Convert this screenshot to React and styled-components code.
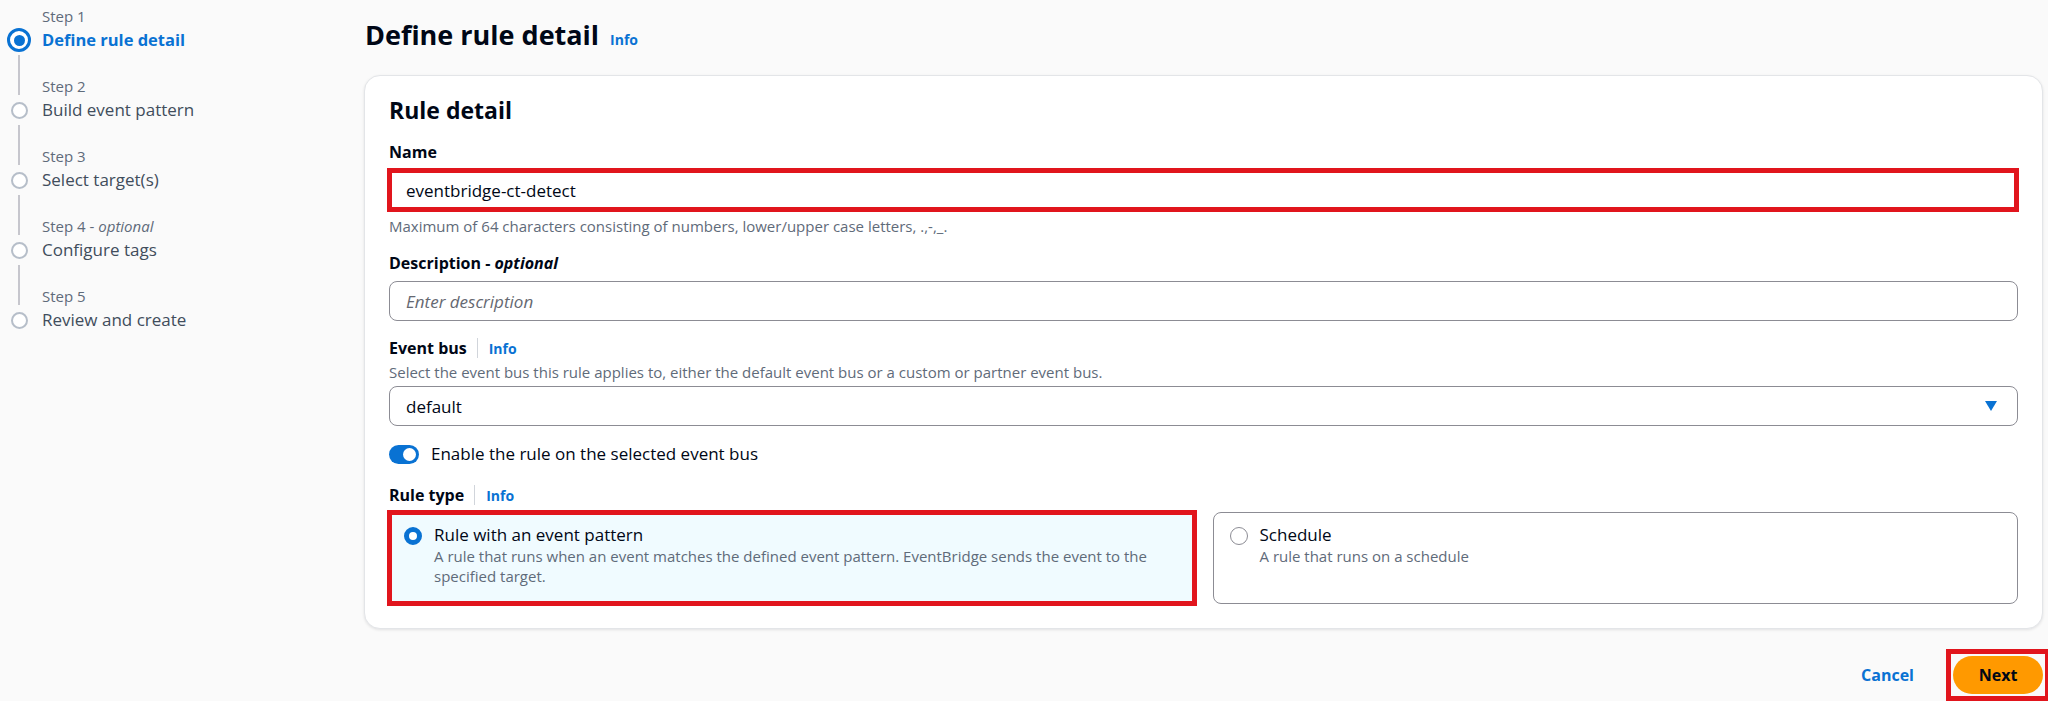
import styled, { createGlobalStyle } from "styled-components";

const GlobalStyle = createGlobalStyle`
  body {
    margin: 0;
    background: #fafafa;
    font-family: "Open Sans", "Liberation Sans", sans-serif;
    color: #000716;
  }
  * { box-sizing: border-box; }
`;

const Page = styled.div`
  display: flex;
  width: 2048px;
  height: 701px;
  overflow: hidden;
`;

const Sidebar = styled.nav`
  width: 364px;
  flex-shrink: 0;
`;

const Step = styled.div`
  display: grid;
  grid-template-columns: 38px 1fr;
  grid-template-rows: 28px 24px 18px;
  column-gap: 4px;
`;

const Connector = styled.div`
  grid-column: 1;
  grid-row: ${(p) => p.$row};
  justify-self: center;
  width: 2px;
  margin: ${(p) => (p.$row === 3 ? "3px 0 0" : "0 0 3px")};
  background: ${(p) => (p.$hidden ? "transparent" : "#c6c6cd")};
`;

const Dot = styled.div`
  grid-column: 1;
  grid-row: 2;
  align-self: center;
  justify-self: center;
  width: ${(p) => (p.$active ? "24px" : "17px")};
  height: ${(p) => (p.$active ? "24px" : "17px")};
  border-radius: 50%;
  border: ${(p) => (p.$active ? "3px solid #0972d3" : "2px solid #b6bec9")};
  background: #fff;
  display: flex;
  align-items: center;
  justify-content: center;
  &::after {
    content: "";
    display: ${(p) => (p.$active ? "block" : "none")};
    width: 11px;
    height: 11px;
    border-radius: 50%;
    background: #0972d3;
  }
`;

const StepLabel = styled.div`
  grid-column: 2;
  grid-row: 1;
  margin-top: 6px;
  font-size: 15px;
  line-height: 20px;
  color: #5f6b7a;
  em { font-style: italic; }
`;

const StepTitle = styled.div`
  grid-column: 2;
  grid-row: 2;
  align-self: center;
  font-size: ${(p) => (p.$active ? "16.5px" : "17px")};
  line-height: 24px;
  font-weight: ${(p) => (p.$active ? 700 : 400)};
  color: ${(p) => (p.$active ? "#0972d3" : "#414d5c")};
`;

const Main = styled.main`
  flex: 1;
  padding-right: 5px;
  display: flex;
  flex-direction: column;
`;

const Header = styled.header`
  display: flex;
  align-items: baseline;
  gap: 11px;
  height: 75px;
  padding: 17px 0 0 1px;
`;

const PageTitle = styled.h1`
  margin: 0;
  font-size: 27px;
  line-height: 36px;
  font-weight: 700;
`;

const InfoLink = styled.a`
  font-size: 14px;
  font-weight: 700;
  color: #0972d3;
  text-decoration: none;
`;

const Card = styled.section`
  background: #fff;
  border: 1px solid #e3e5e8;
  border-radius: 16px;
  box-shadow: 0 1px 3px rgba(0, 7, 22, 0.1);
  padding: 19px 24px 24px;
`;

const CardTitle = styled.h2`
  margin: 0;
  font-size: 23px;
  line-height: 30px;
  font-weight: 700;
`;

const Field = styled.div`
  margin-top: ${(p) => p.$top}px;
  display: flex;
  flex-direction: column;
`;

const LabelRow = styled.div`
  display: flex;
  align-items: center;
  height: 22px;
  margin-bottom: ${(p) => p.$gap}px;
`;

const Label = styled.label`
  font-size: 16px;
  line-height: 22px;
  font-weight: 700;
  em { font-style: italic; }
`;

const Divider = styled.span`
  width: 1px;
  height: 20px;
  background: #d1d5db;
  margin: 0 11px 0 10px;
`;

/* red annotation frame drawn over the screenshot */
const Highlight = styled.div`
  border: 5px solid #e1151d;
  margin: ${(p) => p.$margin};
  padding: ${(p) => p.$pad || "0"};
`;

const Input = styled.div`
  height: ${(p) => (p.$bare ? "34px" : "40px")};
  border: ${(p) => (p.$bare ? "none" : "1px solid #8c8c94")};
  border-radius: ${(p) => (p.$bare ? "0" : "8px")};
  background: #fff;
  padding: ${(p) => (p.$bare ? "0 20px 0 14px" : "0 20px 0 16px")};
  display: flex;
  align-items: center;
  justify-content: space-between;
  font-size: 17px;
  color: ${(p) => (p.$placeholder ? "#656871" : "#000716")};
  font-style: ${(p) => (p.$placeholder ? "italic" : "normal")};
`;

const Hint = styled.div`
  font-size: 15px;
  line-height: 20px;
  color: #5f6b7a;
  margin-top: ${(p) => p.$top || 0}px;
  margin-bottom: ${(p) => p.$bottom || 0}px;
`;

const ToggleRow = styled.div`
  margin-top: 17px;
  display: flex;
  align-items: center;
  gap: 12px;
  font-size: 17px;
  line-height: 22px;
`;

const Toggle = styled.span`
  width: 30px;
  height: 19px;
  border-radius: 10px;
  background: #0972d3;
  display: flex;
  align-items: center;
  justify-content: flex-end;
  padding-right: 3px;
  &::after {
    content: "";
    width: 13px;
    height: 13px;
    border-radius: 50%;
    background: #fff;
  }
`;

const Tiles = styled.div`
  display: grid;
  grid-template-columns: 1fr 1fr;
  grid-auto-rows: 92px;
  gap: 18px;
`;

const Tile = styled.div`
  height: 100%;
  border-radius: ${(p) => (p.$selected ? "0" : "8px")};
  border: ${(p) => (p.$selected ? "none" : "1px solid #8c8c94")};
  background: ${(p) => (p.$selected ? "#f0fbff" : "#fff")};
  padding: ${(p) => (p.$selected ? "9px 12px" : "11px 16px")};
  display: flex;
  gap: 12px;
`;

const Radio = styled.span`
  flex-shrink: 0;
  width: 18px;
  height: 18px;
  margin-top: 3px;
  border-radius: 50%;
  background: #fff;
  border: ${(p) => (p.$checked ? "5px solid #0972d3" : "1.5px solid #8c8c94")};
`;

const TileTitle = styled.div`
  font-size: 17px;
  line-height: 22px;
`;

const Footer = styled.footer`
  margin-top: 27px;
  display: flex;
  justify-content: flex-end;
  align-items: center;
  gap: 19px;
`;

const LinkButton = styled.button`
  border: none;
  background: none;
  font-family: inherit;
  font-size: 16px;
  font-weight: 700;
  color: #0972d3;
  padding: 0 20px;
`;

const PrimaryButton = styled.button`
  display: block;
  width: 90px;
  height: 38px;
  border: none;
  border-radius: 20px;
  background: #ff9900;
  font-family: inherit;
  font-size: 16px;
  font-weight: 700;
  color: #000716;
`;

const steps = [
  { label: "Step 1", title: "Define rule detail" },
  { label: "Step 2", title: "Build event pattern" },
  { label: "Step 3", title: "Select target(s)" },
  { label: "Step 4", optional: true, title: "Configure tags" },
  { label: "Step 5", title: "Review and create" },
];

function Caret() {
  return (
    <svg width="12" height="10" viewBox="0 0 12 10">
      <path d="M0 0 H12 L6 10 Z" fill="#0972d3" />
    </svg>
  );
}

export default function App() {
  return (
    <>
      <GlobalStyle />
      <Page>
        <Sidebar>
          {steps.map((s, i) => (
            <Step key={s.label}>
              <Connector $row={1} $hidden={i === 0} />
              <StepLabel>
                {s.label}
                {s.optional && (
                  <>
                    {" - "}
                    <em>optional</em>
                  </>
                )}
              </StepLabel>
              <Dot $active={i === 0} />
              <StepTitle $active={i === 0}>{s.title}</StepTitle>
              <Connector $row={3} $hidden={i === steps.length - 1} />
            </Step>
          ))}
        </Sidebar>

        <Main>
          <Header>
            <PageTitle>Define rule detail</PageTitle>
            <InfoLink>Info</InfoLink>
          </Header>

          <Card>
            <CardTitle>Rule detail</CardTitle>

            <Field $top={16}>
              <LabelRow $gap={7}>
                <Label>Name</Label>
              </LabelRow>
              <Highlight $margin="-2px -1px -2px -2px">
                <Input $bare>eventbridge-ct-detect</Input>
              </Highlight>
              <Hint $top={6}>
                Maximum of 64 characters consisting of numbers, lower/upper case
                letters, .,-,_.
              </Hint>
            </Field>

            <Field $top={16}>
              <LabelRow $gap={7}>
                <Label>
                  Description - <em>optional</em>
                </Label>
              </LabelRow>
              <Input $placeholder>Enter description</Input>
            </Field>

            <Field $top={16}>
              <LabelRow $gap={3}>
                <Label>Event bus</Label>
                <Divider />
                <InfoLink>Info</InfoLink>
              </LabelRow>
              <Hint $bottom={4}>
                Select the event bus this rule applies to, either the default
                event bus or a custom or partner event bus.
              </Hint>
              <Input>
                default
                <Caret />
              </Input>
            </Field>

            <ToggleRow>
              <Toggle />
              Enable the rule on the selected event bus
            </ToggleRow>

            <Field $top={19}>
              <LabelRow $gap={6}>
                <Label>Rule type</Label>
                <Divider />
                <InfoLink>Info</InfoLink>
              </LabelRow>
              <Tiles>
                <Highlight $margin="-2px">
                  <Tile $selected>
                    <Radio $checked />
                    <div>
                      <TileTitle>Rule with an event pattern</TileTitle>
                      <Hint>
                        A rule that runs when an event matches the defined event
                        pattern. EventBridge sends the event to the specified
                        target.
                      </Hint>
                    </div>
                  </Tile>
                </Highlight>
                <Tile>
                  <Radio />
                  <div>
                    <TileTitle>Schedule</TileTitle>
                    <Hint>A rule that runs on a schedule</Hint>
                  </div>
                </Tile>
              </Tiles>
            </Field>
          </Card>

          <Footer>
            <LinkButton>Cancel</LinkButton>
            <Highlight $margin="-7px" $pad="2px">
              <PrimaryButton>Next</PrimaryButton>
            </Highlight>
          </Footer>
        </Main>
      </Page>
    </>
  );
}
